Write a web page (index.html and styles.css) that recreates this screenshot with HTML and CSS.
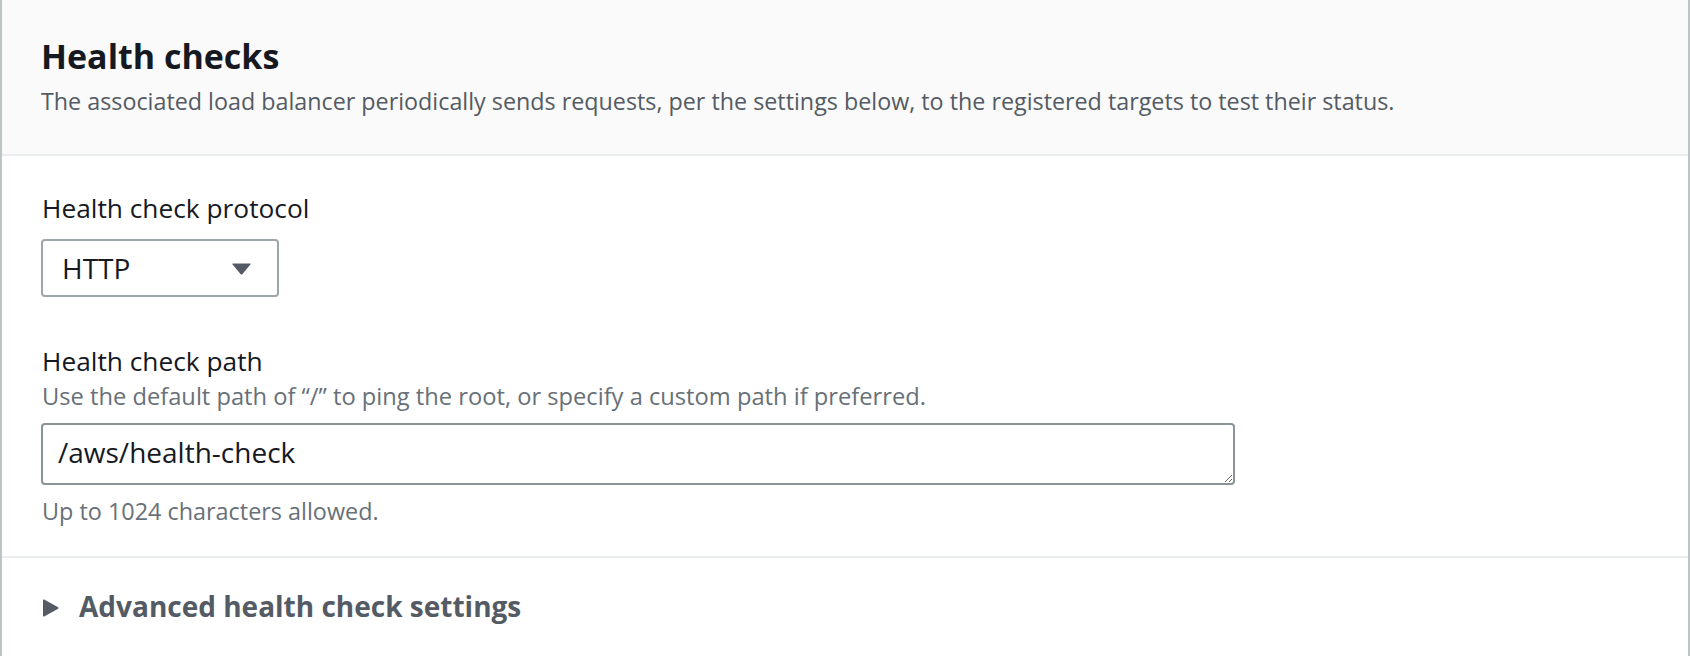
FILE: index.html
```html
<!DOCTYPE html>
<html lang="en">
<head>
<meta charset="utf-8">
<title>Health checks</title>
<link rel="stylesheet" href="styles.css">
</head>
<body>
<section class="card">
  <header class="card-header">
    <h2 class="card-title">Health checks</h2>
    <p class="card-desc">The associated load balancer periodically sends requests, per the settings below, to the registered targets to test their status.</p>
  </header>
  <div class="card-body">
    <div class="field field-protocol">
      <label class="field-label">Health check protocol</label>
      <div class="select">
        <span class="select-value">HTTP</span>
        <svg class="select-caret" width="19" height="12" viewBox="0 0 19 12"><path d="M1 0.5 H18 Q19 0.5 18.4 1.4 L10.3 11.2 Q9.5 12 8.7 11.2 L0.6 1.4 Q0 0.5 1 0.5 Z" fill="#545b64"/></svg>
      </div>
    </div>
    <div class="field field-path">
      <label class="field-label" for="path">Health check path</label>
      <div class="field-desc">Use the default path of “/” to ping the root, or specify a custom path if preferred.</div>
      <textarea id="path" class="textarea" rows="1">/aws/health-check</textarea>
      <div class="field-constraint">Up to 1024 characters allowed.</div>
    </div>
  </div>
  <div class="card-footer">
    <div class="expander">
      <svg class="expander-icon" width="16" height="18" viewBox="0 0 16 18"><path d="M0 1.2 Q0 0 1.1 0.6 L15.2 8.3 Q16 9 15.2 9.7 L1.1 17.4 Q0 18 0 16.8 Z" fill="#545b64"/></svg>
      <span class="expander-title">Advanced health check settings</span>
    </div>
  </div>
</section>
</body>
</html>
```
FILE: styles.css
```css
html, body {
  margin: 0;
  padding: 0;
  background: #ffffff;
}
body {
  font-family: "Open Sans", "Noto Sans", Arial, sans-serif;
  color: #16191f;
}
.card {
  border-left: 2px solid #bcc4c5;
  border-right: 2px solid #bcc4c5;
  min-height: 656px;
  box-sizing: border-box;
  background: #ffffff;
}
.card-header {
  background: #fafafa;
  border-bottom: 2px solid #eaeded;
  padding: 36px 39px 37px;
}
.card-title {
  margin: 0;
  font-size: 34px;
  line-height: 40px;
  font-weight: 700;
  color: #16191f;
}
.card-desc {
  margin: 9px 0 0;
  font-size: 23.3px;
  line-height: 32px;
  color: #545b64;
}
.card-body {
  padding: 34px 39px 29px;
  border-bottom: 2px solid #eaeded;
  display: flex;
  flex-direction: column;
  gap: 46px;
}
.field {
  display: flex;
  flex-direction: column;
  align-items: flex-start;
}
.field-label {
  font-size: 26.3px;
  line-height: 36px;
  color: #16191f;
  margin-left: 1px;
}
.field-protocol .field-label {
  margin-bottom: 13px;
}
.select {
  width: 238px;
  height: 58px;
  box-sizing: border-box;
  border: 2px solid #9ba7a8;
  border-radius: 4px;
  display: flex;
  align-items: center;
  justify-content: space-between;
  padding: 0 26px 0 19px;
  background: #ffffff;
}
.select-value {
  font-size: 28px;
  line-height: 36px;
  color: #16191f;
}
.select-caret {
  display: block;
  margin-top: 1px;
}
.field-desc {
  font-size: 23.7px;
  line-height: 32px;
  color: #687078;
  margin: 1px 0 11px 1px;
}
.textarea {
  display: block;
  width: 1194px;
  height: 62px;
  box-sizing: border-box;
  border: 2px solid #879596;
  border-radius: 4px;
  padding: 9px 15px 0;
  font-family: "Open Sans", "Noto Sans", Arial, sans-serif;
  font-size: 28px;
  line-height: 36px;
  color: #16191f;
  resize: vertical;
  overflow: hidden;
  outline: none;
  margin: 0;
}
.field-constraint {
  font-size: 23.4px;
  line-height: 32px;
  color: #687078;
  margin: 10px 0 0 1px;
}
.card-footer {
  padding: 29px 39px 28px;
}
.expander {
  display: flex;
  align-items: center;
  gap: 20px;
  margin-left: 2px;
}
.expander-icon {
  display: block;
  margin-top: 4px;
}
.expander-title {
  font-size: 28px;
  line-height: 38px;
  font-weight: 700;
  color: #545b64;
}
```
